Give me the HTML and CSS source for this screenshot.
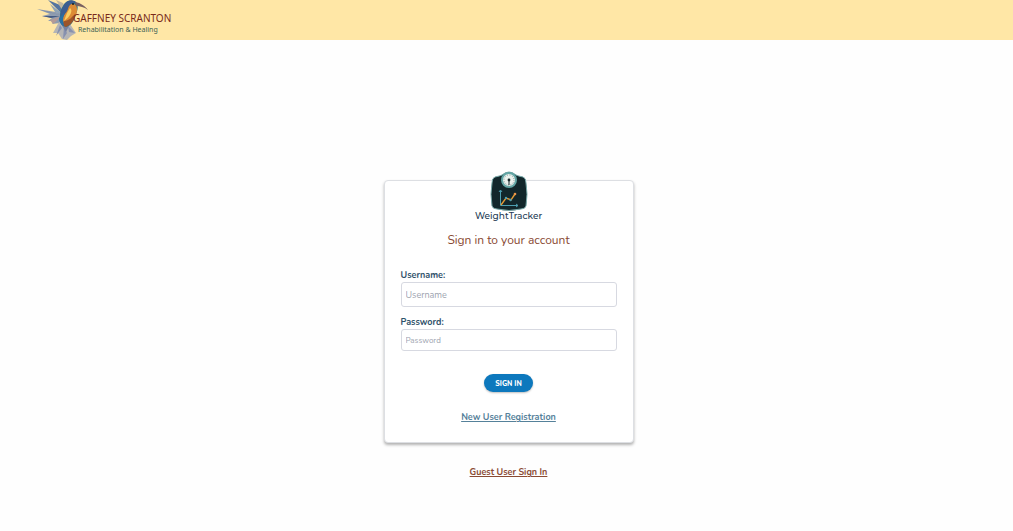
FILE: index.html
```html
<!DOCTYPE html>
<html lang="en">
<head>
<meta charset="utf-8">
<meta name="viewport" content="width=device-width, initial-scale=1">
<title>WeightTracker</title>
<link rel="stylesheet" href="styles.css">
</head>
<body>
<header class="site-header">
  <svg class="bird" viewBox="0 0 54 40" aria-hidden="true">
    <path d="M26 13 1 9l13 5-8 2 10 2-4 3 7 0-3 3 8-1 5-3z" fill="#8f9caf"/>
    <path d="M27 15 12 0l12 5 5 9z" fill="#5575a0"/>
    <path d="M28 15 14 4l5 8z" fill="#8fa3b7"/>
    <path d="M28 13 20 0l7 3 4 7z" fill="#c2b79e"/>
    <path d="M1 9 24 15 12 12zM6 16l18 0-9 2z" fill="#465b83"/>
    <path d="M14 20l12-4-9 8z" fill="#b39b97"/>
    <path d="M23 22 17 33l5 0 4 6 5 1 4-4 5-3-6-9z" fill="#b5b5b6"/>
    <path d="M24 25 20 36l6-8zM28 27l-1 12 4-6zM32 26l7 7-6-1z" fill="#8791af"/>
    <path d="M25 24h9l-4 8z" fill="#7581a0"/>
    <path d="M27 6c3-7 12-7 14-2 2 5-1 9-2 13-2 6-5 9-9 10-5-1-7-6-6-11 0-4 1-7 3-10z" fill="#2c7385"/>
    <path d="M32 6c4-4 9-2 9 3 0 6-2 11-10 16l-5-3c0-6 4-9 6-16z" fill="#dc8b35"/>
    <path d="M34 8c3 2 1 8-6 13l3-8z" fill="#f8ce64"/>
    <path d="M28 5c3-6 10-6 13-2-5-1-8 2-9 6-2 5-5 6-6 11-3-5-1-10 2-15z" fill="#3c5d91"/>
    <path d="M28 21c5 0 8-4 11-7 0 6-4 11-9 13-3-1-4-3-2-6z" fill="#9c5429"/>
    <path d="M23 18l5-5-1 7 1 6c-3-1-5-4-5-8z" fill="#2870a3"/>
    <path d="M39 2c6 1 10 4 13 8-4-3-8-4-12-4z" fill="#796060"/>
    <circle cx="37" cy="4" r="1" fill="#171d29"/>
  </svg>
  <div class="brand">
    <span class="brand-name">GAFFNEY SCRANTON</span>
    <span class="brand-tagline">Rehabilitation &amp; Healing</span>
  </div>
</header>
<main class="page">
  <form class="card">
    <div class="product">
      <svg class="scale" viewBox="0 0 38 40" aria-hidden="true">
        <path d="M5 6Q10 5 12 4Q19-2 26 4Q28 5 33 6Q36 7 36 12Q38 23 36 35Q35 38 31 38Q19 41 7 38Q3 38 2 35Q0 23 2 12Q2 7 5 6Z" fill="#12272b" stroke="#78a9a9"/>
        <circle cx="19" cy="9" r="7" fill="#eaf1ec" stroke="#63a6a5" stroke-width="2"/>
        <circle cx="19" cy="9" r="5" fill="none" stroke="#85979a" stroke-dasharray="1 1.6"/>
        <path d="M19 8v6" stroke="#17272a"/><circle cx="19" cy="9" r="1.4" fill="#17272a"/>
        <path d="M10.500 19.500v15h17M9 21l1.500-2 1.500 2M26 33l2 1.500-2 1.500" fill="none" stroke="#4c9eb0"/>
        <path d="M11 34l5-7 5 2 4-6" fill="none" stroke="#e39a35" stroke-width="1.400"/>
        <circle cx="16" cy="27" r="1.200" fill="#4c9eb0"/><circle cx="20.500" cy="29" r="1.200" fill="#4c9eb0"/><circle cx="25" cy="23" r="1.300" fill="#e99448"/>
      </svg>
      <span class="product-name">WeightTracker</span>
    </div>
    <h1 class="title">Sign in to your account</h1>
    <div class="field">
      <label for="username">Username:</label>
      <input class="input input-large" id="username" type="text" placeholder="Username">
    </div>
    <div class="field">
      <label for="password">Password:</label>
      <input class="input" id="password" type="password" placeholder="Password">
    </div>
    <button class="submit" type="button">SIGN IN</button>
    <a class="link" href="#register">New User Registration</a>
  </form>
  <a class="link link-guest" href="#guest">Guest User Sign In</a>
</main>
</body>
</html>
```
FILE: styles.css
```css
* { box-sizing: border-box; }
body {
  margin: 0;
  background: #fefefe;
  color: #2f526a;
  font-family: "Nunito", "Open Sans", sans-serif;
}
.site-header {
  display: flex;
  align-items: flex-start;
  height: 40px;
  padding-left: 36px;
  background: #ffe7a6;
}
.bird { width: 54px; height: 40px; }
.brand {
  display: flex;
  flex-direction: column;
  margin-left: -17px;
  padding-top: 12px;
  font-family: "Noto Sans", sans-serif;
  white-space: nowrap;
}
.brand-name { color: #792919; font-size: 10px; line-height: 12px; }
.brand-tagline { padding-left: 5px; color: #3d6354; font-size: 7px; line-height: 12px; }
.page {
  display: flex;
  flex-direction: column;
  align-items: center;
  gap: 20px;
  padding: 140px 0 40px 4px;
}
.card {
  display: flex;
  flex-direction: column;
  align-items: center;
  width: 100%;
  max-width: 250px;
  padding: 0 16px 16px;
  border: 1px solid #dddfe3;
  border-radius: 4px;
  background: #fff;
  box-shadow: 0 2px 3px rgba(0, 0, 0, .3);
}
.product {
  display: flex;
  flex-direction: column;
  align-items: center;
  margin-top: -10px;
}
.scale { width: 38px; height: 40px; }
.product-name {
  color: #243b55;
  font-family: "Montserrat", "Inter", sans-serif;
  font-size: 9px;
  font-weight: 500;
  line-height: 10px;
}
.title {
  margin: 11px 0 20px;
  color: #8a4a33;
  font-size: 12px;
  font-weight: 400;
  line-height: 16px;
}
.field { width: 100%; margin-bottom: 8px; }
.field label {
  display: block;
  font-size: 9px;
  font-weight: 700;
  line-height: 14px;
}
.input {
  display: block;
  width: 100%;
  height: 22px;
  padding: 0 4px;
  border: 1px solid #d7d9e1;
  border-radius: 3px;
  background: #fff;
  color: #24475f;
  font-family: inherit;
  font-size: 8px;
}
.input-large { height: 25px; font-size: 9px; }
.input::placeholder { color: #9da3af; opacity: 1; }
.submit {
  height: 18px;
  margin: 15px 0 16px;
  padding: 0 11px;
  border: 0;
  border-radius: 9px;
  background: #0d78bd;
  box-shadow: 0 1px 2px rgba(0, 0, 0, .25);
  color: #fff;
  font-family: inherit;
  font-size: 7px;
  font-weight: 800;
}
.link {
  color: #55819a;
  font-size: 9px;
  font-weight: 700;
  line-height: 18px;
  text-decoration: underline;
}
.link-guest { color: #8a4a33; }
```
